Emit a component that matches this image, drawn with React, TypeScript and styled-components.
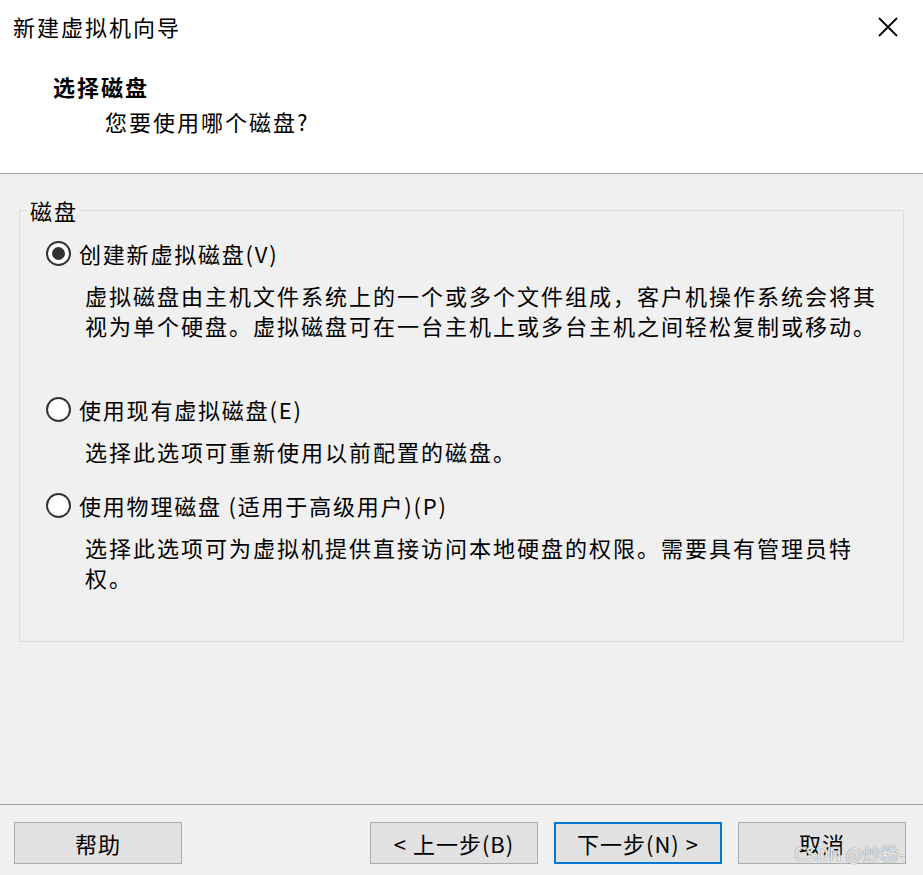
import React from 'react';
import styled, { createGlobalStyle } from 'styled-components';

const GlobalStyle = createGlobalStyle`
  html, body {
    margin: 0;
    padding: 0;
    background: #f0f0f0;
  }
  body {
    font-family: "Noto Sans CJK SC", "Noto Sans", sans-serif;
    color: #000;
  }
`;

const Window = styled.div`
  position: relative;
  width: 923px;
  height: 875px;
  display: flex;
  flex-direction: column;
  background: #f0f0f0;
  overflow: hidden;
`;

const Header = styled.header`
  height: 173px;
  flex: none;
  background: #fff;
  border-bottom: 1px solid #a0a0a0;
  box-sizing: content-box;
`;

const TitleBar = styled.div`
  display: flex;
  align-items: center;
  justify-content: space-between;
  height: 30px;
  padding: 11px 23px 0 13px;
`;

const Title = styled.h1`
  margin: 0;
  font-size: 22px;
  font-weight: 400;
  line-height: 30px;
  letter-spacing: 2px;
`;

const CloseButton = styled.button`
  width: 24px;
  height: 24px;
  padding: 0;
  border: 0;
  background: none;
  display: flex;
  align-items: center;
  justify-content: center;
  margin-top: 2px;
`;

const Heading = styled.h2`
  margin: 30px 0 0 53px;
  font-size: 22px;
  font-weight: 700;
  line-height: 30px;
  letter-spacing: 2px;
`;

const SubHeading = styled.p`
  margin: 5px 0 0 105px;
  font-size: 22px;
  line-height: 30px;
  letter-spacing: 2px;
`;

const Body = styled.main`
  flex: 1;
  padding: 21px 19px 0 19px;
`;

const Group = styled.fieldset`
  margin: 0;
  padding: 13px 0 49px 0;
  border: 1px solid #dcdcdc;
  min-width: 0;
`;

const Legend = styled.legend`
  margin-left: 8px;
  padding: 0 2px;
  font-size: 22px;
  line-height: 30px;
  letter-spacing: 2px;
`;

const Option = styled.div`
  & + & { margin-top: 24px; }
`;

const OptionRow = styled.label`
  display: flex;
  align-items: center;
  height: 30px;
  padding-left: 26px;
  gap: 8px;
  font-size: 22px;
  line-height: 30px;
  letter-spacing: 1.8px;
`;

const Radio = styled.span<{ checked?: boolean }>`
  width: 25px;
  height: 25px;
  box-sizing: border-box;
  border: 2px solid #333;
  border-radius: 50%;
  background: #fff;
  display: flex;
  align-items: center;
  justify-content: center;
  flex: none;
  &::after {
    content: '';
    display: ${p => (p.checked ? 'block' : 'none')};
    width: 13px;
    height: 13px;
    border-radius: 50%;
    background: #333;
  }
`;

const Description = styled.p<{ lines?: number }>`
  margin: 12px 16px 0 65px;
  font-size: 22px;
  line-height: 30px;
  letter-spacing: 2px;
  min-height: ${p => (p.lines || 1) * 30}px;
`;

const Footer = styled.footer`
  height: 71px;
  flex: none;
  box-sizing: border-box;
  border-top: 1px solid #a0a0a0;
  display: flex;
  align-items: flex-start;
  padding: 17px 17px 0 14px;
`;

const Spacer = styled.div`
  flex: 1;
`;

const Button = styled.button<{ primary?: boolean }>`
  width: 168px;
  height: 42px;
  box-sizing: border-box;
  margin: 0;
  padding: 0;
  background: #e1e1e1;
  border: ${p => (p.primary ? '2px solid #0078d7' : '1px solid #adadad')};
  font-family: "Noto Sans CJK SC", "Noto Sans", sans-serif;
  font-size: 22px;
  letter-spacing: 1px;
  color: #000;
  & + & { margin-left: 16px; }
`;

const Watermark = styled.span`
  position: absolute;
  right: 18px;
  bottom: 9px;
  font-family: "Noto Sans CJK SC", "Noto Sans", sans-serif;
  font-size: 18px;
  color: rgba(255, 255, 255, 0.85);
  text-shadow: 0 0 1px #8a8a8a, 0 0 1px #8a8a8a;
  pointer-events: none;
`;

const options = [
  {
    label: '创建新虚拟磁盘(V)',
    desc: '虚拟磁盘由主机文件系统上的一个或多个文件组成，客户机操作系统会将其视为单个硬盘。虚拟磁盘可在一台主机上或多台主机之间轻松复制或移动。',
    checked: true,
    lines: 3,
  },
  {
    label: '使用现有虚拟磁盘(E)',
    desc: '选择此选项可重新使用以前配置的磁盘。',
    lines: 1,
  },
  {
    label: '使用物理磁盘 (适用于高级用户)(P)',
    desc: '选择此选项可为虚拟机提供直接访问本地硬盘的权限。需要具有管理员特权。',
    lines: 2,
  },
];

export default function App() {
  return (
    <Window>
      <GlobalStyle />
      <Header>
        <TitleBar>
          <Title>新建虚拟机向导</Title>
          <CloseButton aria-label="关闭">
            <svg width="20" height="20" viewBox="0 0 20 20">
              <path d="M1 1L19 19M19 1L1 19" stroke="#000" strokeWidth="1.8" fill="none" />
            </svg>
          </CloseButton>
        </TitleBar>
        <Heading>选择磁盘</Heading>
        <SubHeading>您要使用哪个磁盘?</SubHeading>
      </Header>
      <Body>
        <Group>
          <Legend>磁盘</Legend>
          {options.map(o => (
            <Option key={o.label}>
              <OptionRow>
                <Radio checked={o.checked} />
                {o.label}
              </OptionRow>
              <Description lines={o.lines}>{o.desc}</Description>
            </Option>
          ))}
        </Group>
      </Body>
      <Footer>
        <Button>帮助</Button>
        <Spacer />
        <Button>&lt; 上一步(B)</Button>
        <Button primary>下一步(N) &gt;</Button>
        <Button>取消</Button>
      </Footer>
      <Watermark>CSDN @炒粉-</Watermark>
    </Window>
  );
}
